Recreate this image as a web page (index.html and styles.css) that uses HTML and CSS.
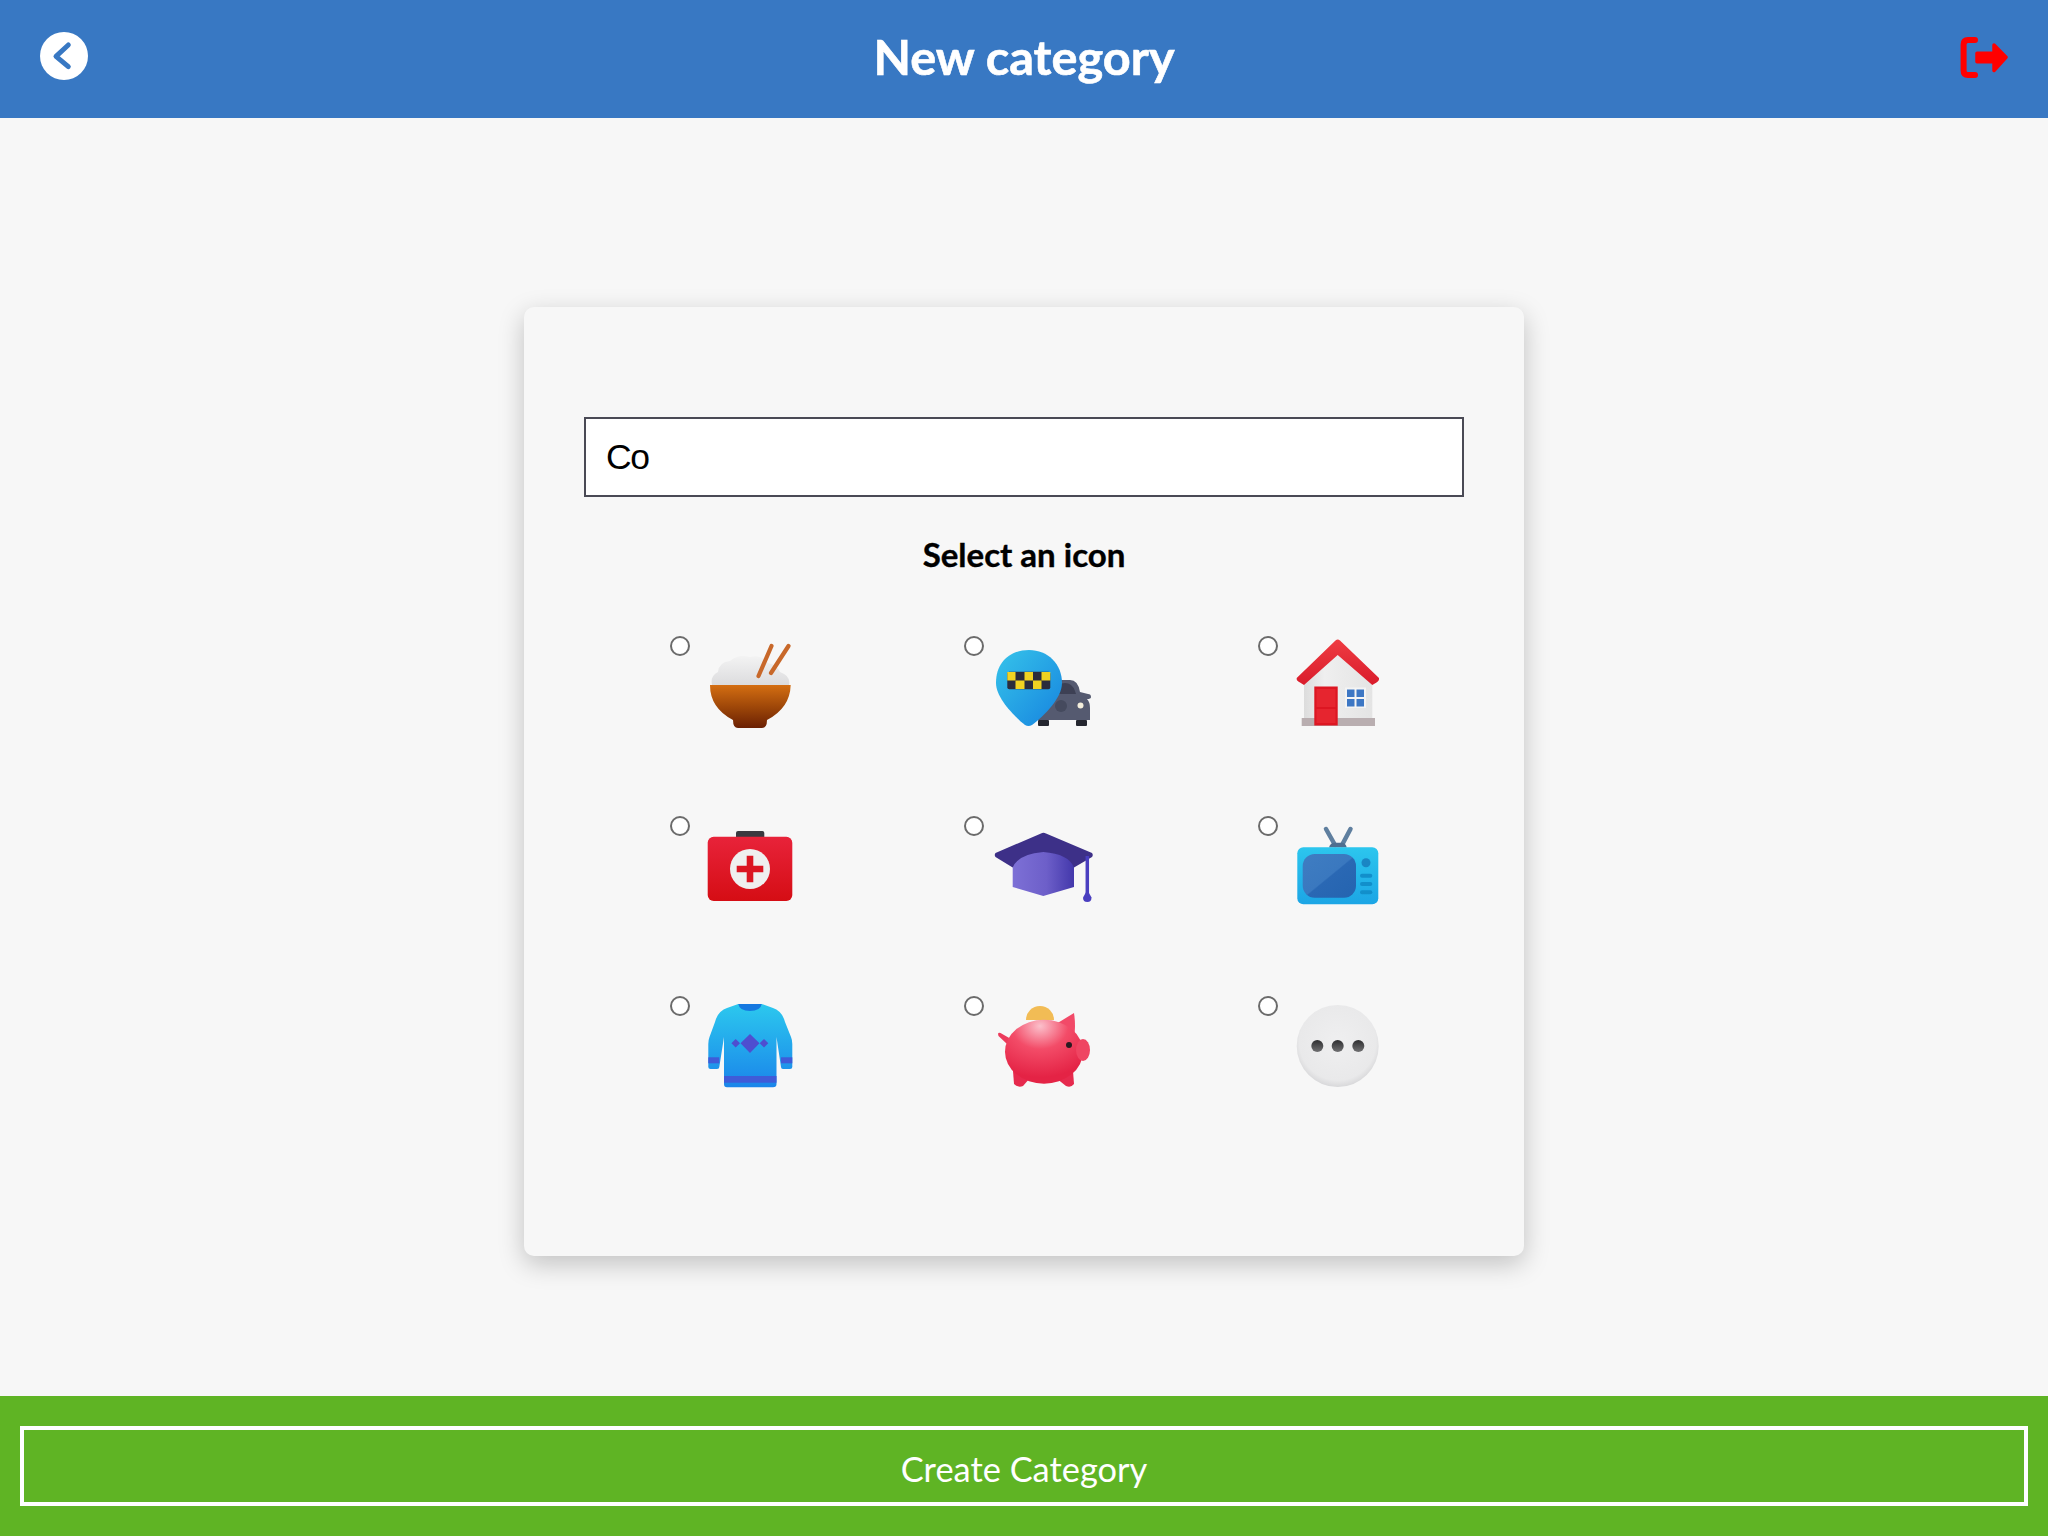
FILE: index.html
```html
<!DOCTYPE html>
<html lang="en">
<head>
<meta charset="utf-8">
<title>New category</title>
<link rel="stylesheet" href="styles.css">
</head>
<body>
<header class="topbar">
  <a class="back" aria-label="Back">
    <svg width="48" height="48" viewBox="0 0 48 48"><circle cx="24" cy="24" r="24" fill="#fff"/><path d="M28.3 13 16 24.3 28.3 34.7" fill="none" stroke="#3878c3" stroke-width="5" stroke-linecap="round" stroke-linejoin="round"/></svg>
  </a>
  <h1 class="title">New category</h1>
  <a class="exit" aria-label="Log out">
    <svg width="48" height="48" viewBox="0 0 48 48"><path d="M15 7H8Q3.600 7 3.600 11.500V37.500Q3.600 42 8 42H15" fill="none" stroke="#f00" stroke-width="6" stroke-linecap="round"/><path d="M17 20.200H34V12L46 24.300 34 37.500V28.800H17Z" fill="#f00" stroke="#f00" stroke-width="3.500" stroke-linejoin="round"/></svg>
  </a>
</header>
<main class="content">
  <section class="card">
    <div class="field">Co</div>
    <h2 class="prompt">Select an icon</h2>
    <div class="icons">
      <label class="option"><input class="radio" type="radio" name="icon">
        <svg class="pic" viewBox="0 0 100 100"><defs><linearGradient id="bowl" x1="0" y1="0" x2="0" y2="1"><stop offset="0" stop-color="#d46e12"/><stop offset=".55" stop-color="#9a4408"/><stop offset="1" stop-color="#6b2003"/></linearGradient><linearGradient id="rice" x1="0" y1="0" x2="0" y2="1"><stop offset="0" stop-color="#f3f3f3"/><stop offset="1" stop-color="#dcdcde"/></linearGradient></defs>
          <path d="M12 49Q10 40 18 36Q19 26 30 25Q38 18 50 21Q62 18 68 27Q77 29 80 36Q91 40 89 49Z" fill="url(#rice)"/>
          <path d="M58.500 40 71.500 10M71 37 88.500 10" stroke="#c8682a" stroke-width="4.200" stroke-linecap="round"/>
          <path d="M10 49H90.700Q90 72 67 84Q67 92 62 92H38Q33 92 33 84Q10 72 10 49Z" fill="url(#bowl)"/>
        </svg>
      </label>
      <label class="option"><input class="radio" type="radio" name="icon">
        <svg class="pic" viewBox="0 0 100 100"><defs><linearGradient id="pin" x1="0" y1="0" x2="1" y2="1"><stop offset="0" stop-color="#36c4ea"/><stop offset="1" stop-color="#1683df"/></linearGradient></defs>
          <path d="M55 56Q57 44 68 44H76Q84 44 86 56L94 58Q97 58 97 61Q97 63 93 63Q96 66 96 72V84H44V65Z" fill="#555a70"/><path d="M62 53Q64 47 71 47Q78 47 81 55L82 58H60Z" fill="#3d4054"/>
          <rect x="44" y="84" width="11" height="6" rx="1" fill="#24262f"/><rect x="82" y="84" width="11" height="6" rx="1" fill="#24262f"/>
          <circle cx="86.500" cy="69.500" r="3" fill="#f3eedc"/><circle cx="67" cy="70" r="6" fill="#454a5e"/>
          <path d="M35 14C54 14 68 28 68 47C68 62 50 80 38 89Q34.500 91 31 89C20 80 2 62 2 47C2 26 16 14 35 14Z" fill="url(#pin)"/>
          <rect x="13.300" y="35.700" width="43" height="17.600" rx="2" fill="#2b2c3c"/>
          <rect x="13.300" y="36" width="8.200" height="8.500" fill="#f1d322"/><rect x="30.500" y="36" width="8.500" height="8.500" fill="#f1d322"/><rect x="47.500" y="36" width="8.800" height="8.500" fill="#f1d322"/><rect x="21.500" y="44.500" width="9" height="8.500" fill="#f1d322"/><rect x="39" y="44.500" width="8.500" height="8.500" fill="#f1d322"/>
        </svg>
      </label>
      <label class="option"><input class="radio" type="radio" name="icon">
        <svg class="pic" viewBox="0 0 100 100"><defs><linearGradient id="wall" x1="0" y1="0" x2="1" y2="0"><stop offset="0" stop-color="#dcdcdc"/><stop offset=".3" stop-color="#efefef"/><stop offset="1" stop-color="#e4e4e4"/></linearGradient><linearGradient id="roof" x1="0" y1="0" x2="0" y2="1"><stop offset="0" stop-color="#ef3c42"/><stop offset="1" stop-color="#d91c2b"/></linearGradient></defs>
          <path d="M16 46 50 17 84.300 46V83H16Z" fill="url(#wall)"/><rect x="13.700" y="82" width="73.300" height="8" fill="#b9aeb0"/>
          <rect x="26.300" y="50.500" width="23.400" height="39" fill="#dd1622"/><rect x="28.500" y="53" width="19" height="18" fill="#e6252f"/><rect x="28.500" y="73" width="19" height="14" fill="#e6252f"/>
          <rect x="57" y="51.500" width="21" height="20.500" fill="#f4f4f4"/><rect x="59" y="53.500" width="7.500" height="7.500" fill="#3d77c4"/><rect x="68.500" y="53.500" width="7.500" height="7.500" fill="#3d77c4"/><rect x="59" y="63" width="7.500" height="7.500" fill="#3d77c4"/><rect x="68.500" y="63" width="7.500" height="7.500" fill="#3d77c4"/>
          <path d="M47.500 4.500Q49.700 2.500 52 4.500L91 42Q91.500 44.500 88.500 46.500L84.300 49 49.700 19 16 49 12 46.500Q8 44.500 8.700 42Z" fill="url(#roof)"/>
        </svg>
      </label>
      <label class="option"><input class="radio" type="radio" name="icon">
        <svg class="pic" viewBox="0 0 100 100"><defs><linearGradient id="kit" x1="0" y1="0" x2="0" y2="1"><stop offset="0" stop-color="#e8233a"/><stop offset="1" stop-color="#d50d14"/></linearGradient></defs>
          <rect x="36" y="15" width="28.300" height="8" rx="2" fill="#3a3a40"/><rect x="7.700" y="20.700" width="84.600" height="64.300" rx="6" fill="url(#kit)"/>
          <circle cx="50" cy="53" r="20" fill="#efefef"/><path d="M46.700 39.700H53.300V49.700H63.300V56.300H53.300V66.300H46.700V56.300H36.700V49.700H46.700Z" fill="#db1522"/>
        </svg>
      </label>
      <label class="option"><input class="radio" type="radio" name="icon">
        <svg class="pic" viewBox="0 0 100 100"><defs><linearGradient id="dome" x1="0" y1="0" x2="1" y2="0"><stop offset="0" stop-color="#7d70d6"/><stop offset=".55" stop-color="#6d5fc9"/><stop offset="1" stop-color="#4338ab"/></linearGradient></defs>
          <path d="M18.700 42 49.300 32 80 42V71L49.300 80 18.700 71Z" fill="url(#dome)"/>
          <path d="M47 17.500Q49.300 16 52 17.500L98 37Q99.500 39 98 41L80 51.500Q75 38 49.300 36Q24 38 18.700 51.500L1.500 41Q0 39 1.500 37Z" fill="#3d3088"/>
          <path d="M93.300 40V78" stroke="#4a3fc0" stroke-width="3.500"/><path d="M93.300 74 97.500 81.500Q97.500 86 93.300 86Q89 86 89 81.500Z" fill="#4a3fc0"/>
        </svg>
      </label>
      <label class="option"><input class="radio" type="radio" name="icon">
        <svg class="pic" viewBox="0 0 100 100"><defs><linearGradient id="tvb" x1="0" y1="0" x2="0" y2="1"><stop offset="0" stop-color="#2cc6ee"/><stop offset="1" stop-color="#1ca5e5"/></linearGradient><linearGradient id="scr" x1="0" y1="0" x2="1" y2="1"><stop offset="0" stop-color="#3f7dc2"/><stop offset=".5" stop-color="#3a78bf"/><stop offset=".52" stop-color="#2a68b4"/><stop offset="1" stop-color="#2464b0"/></linearGradient></defs>
          <path d="M38 13 47 29M62.500 13 54 29" stroke="#5f7f9f" stroke-width="4.500" stroke-linecap="round"/><path d="M41 31.500Q42 26.700 47 26.700H53Q58 26.700 58.700 31.500Z" fill="#4f6e8f"/>
          <rect x="9.300" y="31.300" width="81" height="57" rx="6" fill="url(#tvb)"/><rect x="14.700" y="38" width="53.300" height="43.700" rx="12" fill="url(#scr)"/>
          <circle cx="78" cy="46.700" r="4.500" fill="#1a86c4"/><rect x="72" y="57.700" width="12.300" height="4" rx="2" fill="#128fcb"/><rect x="72" y="66" width="12.300" height="4" rx="2" fill="#128fcb"/><rect x="72" y="74.300" width="12.300" height="4" rx="2" fill="#128fcb"/>
        </svg>
      </label>
      <label class="option"><input class="radio" type="radio" name="icon">
        <svg class="pic" viewBox="0 0 100 100"><defs><linearGradient id="swt" x1="0" y1="0" x2="0" y2="1"><stop offset="0" stop-color="#2cc8ee"/><stop offset="1" stop-color="#1a85ea"/></linearGradient></defs>
          <path d="M38.300 8H61.700L73 12Q82 15 85 26L91 41Q92.300 44 92.300 48V71Q92.300 73 90 73H83Q81 73 81 71L76.500 41V88Q76.500 91.300 73 91.300H27Q24 91.300 24 88V41L19.300 71Q19.300 73 17 73H10.500Q8.300 73 8.300 71V48Q8.300 44 9.500 41L15 26Q18 15 27 12Z" fill="url(#swt)"/>
          <path d="M38.300 8H61.700Q60.500 15 50 15Q39.500 15 38.300 8Z" fill="#1578e0"/>
          <path d="M50 38 59.500 47.300 50 57 40.500 47.300ZM35.700 43 40 47.300 35.700 51.500 31.400 47.300ZM64 43 68.300 47.300 64 51.500 59.700 47.300Z" fill="#4e4ed0"/>
          <rect x="24" y="80" width="52.500" height="6.700" fill="#3f5bd8"/><rect x="8.300" y="61.300" width="11" height="6" fill="#3f5bd8"/><rect x="81" y="61.300" width="11.300" height="6" fill="#3f5bd8"/>
        </svg>
      </label>
      <label class="option"><input class="radio" type="radio" name="icon">
        <svg class="pic" viewBox="0 0 100 100"><defs><radialGradient id="pig" cx=".45" cy=".1" r=".8"><stop offset="0" stop-color="#fbc0cb"/><stop offset=".45" stop-color="#f34c68"/><stop offset="1" stop-color="#e42345"/></radialGradient></defs>
          <path d="M32 24A14 14 0 0 1 60 24Z" fill="#f2bc55"/>
          <path d="M13 48 4.500 40Q3 36 6.500 37L17 43Z" fill="#ec3b5c"/>
          <path d="M19 75 26 70 36 82 29 90Q24 92 20 88Z" fill="#e62a4d"/><path d="M62 82 72 70 79 75 80 88Q77 92 72 90Z" fill="#e62a4d"/>
          <path d="M62 28 80 17Q82 30 80 42Z" fill="#f24a68"/>
          <ellipse cx="50" cy="55.700" rx="39" ry="32" fill="url(#pig)"/>
          <ellipse cx="89" cy="54" rx="7" ry="11" fill="#ef4562"/><circle cx="75" cy="49" r="3" fill="#2a1a20"/>
        </svg>
      </label>
      <label class="option"><input class="radio" type="radio" name="icon">
        <svg class="pic" viewBox="0 0 100 100"><defs><radialGradient id="dotc" cx=".5" cy=".45" r=".55"><stop offset="0" stop-color="#efeff0"/><stop offset=".85" stop-color="#e9e9ea"/><stop offset="1" stop-color="#d8d8da"/></radialGradient><linearGradient id="dot" x1="0" y1="0" x2="0" y2="1"><stop offset="0" stop-color="#2e2e30"/><stop offset="1" stop-color="#707072"/></linearGradient></defs>
          <circle cx="49.700" cy="50" r="41" fill="url(#dotc)"/><circle cx="29.300" cy="50" r="6" fill="url(#dot)"/><circle cx="49.700" cy="50" r="6" fill="url(#dot)"/><circle cx="70.300" cy="50" r="6" fill="url(#dot)"/>
        </svg>
      </label>
    </div>
  </section>
</main>
<footer class="actions">
  <button class="create" type="button">Create Category</button>
</footer>
</body>
</html>
```
FILE: styles.css
```css
* { box-sizing: border-box; }
html, body { margin: 0; padding: 0; }
body {
  width: 2048px;
  height: 1536px;
  display: flex;
  flex-direction: column;
  background: #f7f7f7;
  font-family: Lato, "Liberation Sans", sans-serif;
  overflow: hidden;
}
.topbar {
  height: 118px;
  flex: none;
  display: grid;
  grid-template-columns: 48px 1fr 48px;
  padding: 32px 40px 0;
  background: #3878c3;
}
.back, .exit { display: block; height: 48px; }
.back svg, .exit svg { display: block; }
.exit { margin-top: 1px; }
.title {
  margin: -3px 0 0;
  text-align: center;
  color: #fff;
  font-size: 48.700px;
  line-height: 54px;
  font-weight: 700;
  -webkit-text-stroke: 0.6px #fff;
}
.content {
  flex: 1;
  display: flex;
  justify-content: center;
  padding-top: 189px;
}
.card {
  width: 1000px;
  height: 949px;
  padding: 110px 60px 0;
  background: #f7f7f7;
  border-radius: 10px;
  box-shadow: 0 8px 26px rgba(0, 0, 0, 0.22);
}
.field {
  height: 80px;
  padding: 0 20px;
  background: #fff;
  border: 2px solid #4a4a55;
  color: #000;
  font-family: "Liberation Sans", Arial, sans-serif;
  font-size: 35.500px;
  letter-spacing: -1.500px;
  line-height: 77px;
}
.prompt {
  margin: 37px 0 62px;
  text-align: center;
  color: #000;
  font-size: 33px;
  line-height: 40px;
  font-weight: 700;
  -webkit-text-stroke: 0.4px #000;
}
.icons {
  display: grid;
  grid-template-columns: repeat(3, 294px);
  grid-auto-rows: 100px;
  row-gap: 80px;
  padding-left: 86px;
}
.option { display: flex; align-items: flex-start; gap: 10px; }
.radio {
  appearance: none;
  -webkit-appearance: none;
  flex: none;
  width: 20px;
  height: 20px;
  margin: 0;
  background: #fff;
  border: 2px solid #6b6b6b;
  border-radius: 50%;
}
.pic { display: block; width: 100px; height: 100px; flex: none; }
.actions {
  height: 140px;
  flex: none;
  padding: 30px 20px;
  background: #5fb424;
}
.create {
  display: block;
  width: 100%;
  height: 80px;
  padding: 4px 0 0;
  background: transparent;
  border: 4px solid #fff;
  color: #fff;
  font-family: Lato, "Liberation Sans", sans-serif;
  font-size: 34.400px;
  font-weight: 400;
}
```
